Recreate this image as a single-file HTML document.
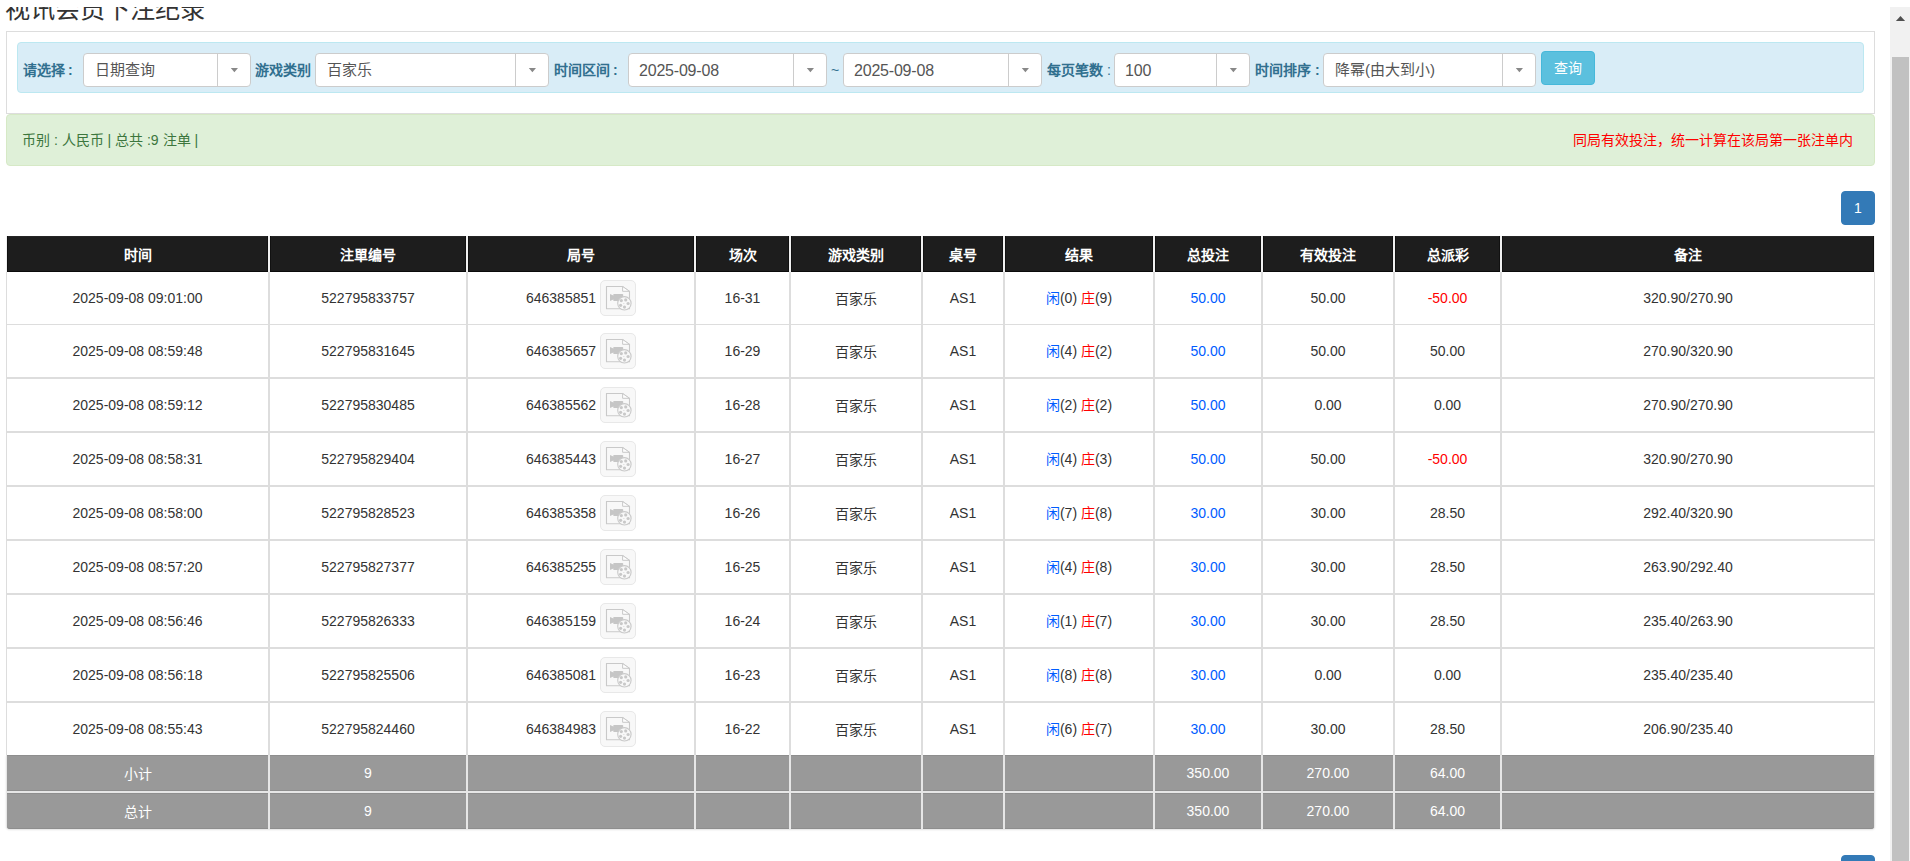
<!DOCTYPE html>
<html lang="zh-CN"><head><meta charset="utf-8"><style>
*{box-sizing:border-box;margin:0;padding:0}
html,body{width:1910px;height:861px;overflow:hidden;background:#fff}
body{font-family:"Liberation Sans",sans-serif;font-size:14px;color:#333;position:relative}
.abs{position:absolute}
.title{position:absolute;left:5px;top:-6px;font-weight:300;font-size:25.2px;line-height:30px;color:#333;white-space:nowrap}
.panel{position:absolute;left:6px;top:31px;width:1869px;height:83px;border:1px solid #ddd;background:#fff}
.ainfo{position:absolute;left:17px;top:42px;width:1847px;height:51px;background:#d9edf7;border:1px solid #bce8f1;border-radius:4px}
.lbl{position:absolute;top:60px;line-height:20px;font-size:14px;font-weight:bold;color:#31708f;white-space:nowrap}
.lbl .n{font-weight:normal}
.sel{position:absolute;background:#fff;border:1px solid #ccc;border-radius:4px}
.st{position:absolute;left:11px;top:0;line-height:32px;font-size:15px;color:#555;white-space:nowrap}
.dg{font-size:16px;letter-spacing:-0.2px;position:relative;left:-1px;top:1px}
.sd{position:absolute;top:0;bottom:0;width:1px;background:#ccc}
.sa{position:absolute;top:0;bottom:0}
.caret{position:absolute;left:50%;top:50%;margin-left:-3.2px;margin-top:-2px;width:0;height:0;border-left:3.7px solid transparent;border-right:3.7px solid transparent;border-top:4px solid #888}
.btn{position:absolute;left:1541px;top:51px;width:54px;height:34px;background:#5bc0de;border:1px solid #46b8da;border-radius:4px;color:#fff;font-size:14px;line-height:32px;text-align:center}
.asuc{position:absolute;left:6px;top:114px;width:1869px;height:52px;background:#dff0d8;border:1px solid #d6e9c6;border-radius:4px}
.gt{position:absolute;left:22px;top:130px;line-height:20px;font-size:14px;color:#3c763d;white-space:nowrap}
.rt{position:absolute;right:57px;top:130px;line-height:20px;font-size:14px;color:#f00;white-space:nowrap}
.pg{position:absolute;left:1841px;width:34px;height:34px;background:#337ab7;border:1px solid #337ab7;border-radius:4px;color:#fff;font-size:14px;line-height:32px;text-align:center}
.c{position:absolute;display:flex;align-items:center;justify-content:center;white-space:nowrap}
.th{padding-bottom:1px;background:#1d1d1d;color:#fff;font-weight:bold;font-size:14px;box-shadow:inset 0 -1px 0 #0b0b0b, inset 1px 0 0 #111, inset -1px 0 0 #111, inset 0 1px 0 #262626}
.td{background:#fff;color:#333;font-size:14px}
.ft{background:#999;color:#fff;font-size:14px;box-shadow:inset 0 -1px 0 #8e8e8e, inset 0 1px 0 #8e8e8e}
.bl{color:#005cff}.rd{color:#f00}.cj{position:relative;top:1px}
.ib{display:inline-block;width:36px;height:36px;margin-left:4px;border:1px solid #e8e8e8;border-radius:5px;background:#f8f8f8;position:relative;vertical-align:middle}
.ib svg{position:absolute;left:-1px;top:-1px}
.sb{position:absolute;left:1890px;top:7px;width:20px;height:854px;background:#f1f1f1}
.sbt{position:absolute;left:1892px;top:57px;width:17px;height:804px;background:#c1c1c1}
.sbu{position:absolute;left:1896px;top:16px;width:0;height:0;border-left:4.5px solid transparent;border-right:4.5px solid transparent;border-bottom:5px solid #505050}
</style></head><body>
<div class="title">视讯会员下注纪录</div><div class="abs" style="left:0;top:0;width:1910px;height:7px;background:#fff"></div>
<div class="panel"></div>
<div class="ainfo"></div>
<div class="lbl" style="left:23px">请选择<span style="margin-left:3px">:</span></div>
<div class="sel" style="left:83px;top:53px;width:168px;height:34px"><span class="st">日期查询</span><div class="sd" style="left:133px"></div><div class="sa" style="left:134px;width:32px"><svg width="32" height="32" style="position:absolute;left:0;top:0"><polygon points="12.80,14.1 20.00,14.1 16.40,18.2" fill="#888"/></svg></div></div>
<div class="lbl" style="left:255px">游戏类别</div>
<div class="sel" style="left:315px;top:53px;width:234px;height:34px"><span class="st">百家乐</span><div class="sd" style="left:199px"></div><div class="sa" style="left:200px;width:32px"><svg width="32" height="32" style="position:absolute;left:0;top:0"><polygon points="12.80,14.1 20.00,14.1 16.40,18.2" fill="#888"/></svg></div></div>
<div class="lbl" style="left:554px">时间区间<span style="margin-left:3px">:</span></div>
<div class="sel" style="left:628px;top:53px;width:199px;height:34px"><span class="st"><span class="dg">2025-09-08</span></span><div class="sd" style="left:164px"></div><div class="sa" style="left:165px;width:32px"><svg width="32" height="32" style="position:absolute;left:0;top:0"><polygon points="12.80,14.1 20.00,14.1 16.40,18.2" fill="#888"/></svg></div></div>
<div class="lbl n" style="left:831px;font-weight:normal">~</div>
<div class="sel" style="left:843px;top:53px;width:199px;height:34px"><span class="st"><span class="dg">2025-09-08</span></span><div class="sd" style="left:164px"></div><div class="sa" style="left:165px;width:32px"><svg width="32" height="32" style="position:absolute;left:0;top:0"><polygon points="12.80,14.1 20.00,14.1 16.40,18.2" fill="#888"/></svg></div></div>
<div class="lbl" style="left:1047px">每页笔数 <span class="n">:</span></div>
<div class="sel" style="left:1114px;top:53px;width:136px;height:34px"><span class="st"><span class="dg">100</span></span><div class="sd" style="left:101px"></div><div class="sa" style="left:102px;width:32px"><svg width="32" height="32" style="position:absolute;left:0;top:0"><polygon points="12.80,14.1 20.00,14.1 16.40,18.2" fill="#888"/></svg></div></div>
<div class="lbl" style="left:1255px">时间排序 :</div>
<div class="sel" style="left:1323px;top:53px;width:213px;height:34px"><span class="st">降幂(由大到小)</span><div class="sd" style="left:178px"></div><div class="sa" style="left:179px;width:32px"><svg width="32" height="32" style="position:absolute;left:0;top:0"><polygon points="12.80,14.1 20.00,14.1 16.40,18.2" fill="#888"/></svg></div></div>
<div class="btn">查询</div>
<div class="asuc"></div>
<div class="gt">币别 : 人民币 | 总共 :9 注单 |</div>
<div class="rt">同局有效投注，统一计算在该局第一张注单内</div>
<div class="pg" style="top:191px">1</div>
<div class="abs" style="left:6px;top:272px;width:1869px;height:483px;background:#ddd"></div>
<div class="abs" style="left:6px;top:236px;width:1869px;height:36px;background:#f0f0f0"></div>
<div class="abs" style="left:6px;top:755px;width:1869px;height:74px;background:#e6e6e6;border-radius:0 0 4px 4px;box-shadow:0 1px 2px rgba(0,0,0,.12)"></div>
<div class="c th" style="left:7px;top:236px;width:261px;height:36px"><span>时间</span></div>
<div class="c th" style="left:270px;top:236px;width:196px;height:36px"><span>注單编号</span></div>
<div class="c th" style="left:468px;top:236px;width:226px;height:36px"><span>局号</span></div>
<div class="c th" style="left:696px;top:236px;width:93px;height:36px"><span>场次</span></div>
<div class="c th" style="left:791px;top:236px;width:130px;height:36px"><span>游戏类别</span></div>
<div class="c th" style="left:923px;top:236px;width:80px;height:36px"><span>桌号</span></div>
<div class="c th" style="left:1005px;top:236px;width:148px;height:36px"><span>结果</span></div>
<div class="c th" style="left:1155px;top:236px;width:106px;height:36px"><span>总投注</span></div>
<div class="c th" style="left:1263px;top:236px;width:130px;height:36px"><span>有效投注</span></div>
<div class="c th" style="left:1395px;top:236px;width:105px;height:36px"><span>总派彩</span></div>
<div class="c th" style="left:1502px;top:236px;width:372px;height:36px"><span>备注</span></div>
<div class="c td" style="left:7px;top:272px;width:261px;height:52px"><span>2025-09-08 09:01:00</span></div>
<div class="c td" style="left:270px;top:272px;width:196px;height:52px"><span>522795833757</span></div>
<div class="c td" style="left:468px;top:272px;width:226px;height:52px"><span><span style="position:relative;top:1px">646385851</span><span class="ib"><svg width="36" height="36" viewBox="0 0 36 36"><path d="M6.5 6.5 H22.6 L29.5 11.5 V28.8 H6.5 Z" fill="#f8f8f8" stroke="#c9c9c9" stroke-width="1.1"/><path d="M22.6 6.5 V11.3 H29.5 Z" fill="#fdfdfd" stroke="#c9c9c9" stroke-width="1"/><path d="M10 14 L13.4 15.6 V14 H22.4 Q23.2 14 23.2 14.8 V21.1 H13.4 V19.6 L10 21 Z" fill="#c6c6c6"/><circle cx="24.4" cy="23.3" r="6.7" fill="#f8f8f8" stroke="#c9c9c9" stroke-width="1.1"/><circle cx="21.3" cy="20.6" r="1.6" fill="#c8c8c8"/><circle cx="25.7" cy="19.9" r="1.6" fill="#c8c8c8"/><circle cx="28.1" cy="23.5" r="1.6" fill="#c8c8c8"/><circle cx="24.5" cy="27.1" r="1.6" fill="#c8c8c8"/><circle cx="20.6" cy="25.3" r="1.6" fill="#c8c8c8"/><rect x="23.2" y="23.1" width="1.2" height="0.6" fill="#ccc"/></svg></span></span></div>
<div class="c td" style="left:696px;top:272px;width:93px;height:52px"><span>16-31</span></div>
<div class="c td" style="left:791px;top:272px;width:130px;height:52px"><span>百家乐</span></div>
<div class="c td" style="left:923px;top:272px;width:80px;height:52px"><span>AS1</span></div>
<div class="c td" style="left:1005px;top:272px;width:148px;height:52px"><span><span style="position:relative;top:-1px"><span class="bl">闲</span>(0) <span class="rd">庄</span>(9)</span></span></div>
<div class="c td" style="left:1155px;top:272px;width:106px;height:52px"><span><span class="bl">50.00</span></span></div>
<div class="c td" style="left:1263px;top:272px;width:130px;height:52px"><span>50.00</span></div>
<div class="c td" style="left:1395px;top:272px;width:105px;height:52px"><span><span class="rd">-50.00</span></span></div>
<div class="c td" style="left:1502px;top:272px;width:372px;height:52px"><span>320.90/270.90</span></div>
<div class="c td" style="left:7px;top:325px;width:261px;height:52px"><span>2025-09-08 08:59:48</span></div>
<div class="c td" style="left:270px;top:325px;width:196px;height:52px"><span>522795831645</span></div>
<div class="c td" style="left:468px;top:325px;width:226px;height:52px"><span><span style="position:relative;top:1px">646385657</span><span class="ib"><svg width="36" height="36" viewBox="0 0 36 36"><path d="M6.5 6.5 H22.6 L29.5 11.5 V28.8 H6.5 Z" fill="#f8f8f8" stroke="#c9c9c9" stroke-width="1.1"/><path d="M22.6 6.5 V11.3 H29.5 Z" fill="#fdfdfd" stroke="#c9c9c9" stroke-width="1"/><path d="M10 14 L13.4 15.6 V14 H22.4 Q23.2 14 23.2 14.8 V21.1 H13.4 V19.6 L10 21 Z" fill="#c6c6c6"/><circle cx="24.4" cy="23.3" r="6.7" fill="#f8f8f8" stroke="#c9c9c9" stroke-width="1.1"/><circle cx="21.3" cy="20.6" r="1.6" fill="#c8c8c8"/><circle cx="25.7" cy="19.9" r="1.6" fill="#c8c8c8"/><circle cx="28.1" cy="23.5" r="1.6" fill="#c8c8c8"/><circle cx="24.5" cy="27.1" r="1.6" fill="#c8c8c8"/><circle cx="20.6" cy="25.3" r="1.6" fill="#c8c8c8"/><rect x="23.2" y="23.1" width="1.2" height="0.6" fill="#ccc"/></svg></span></span></div>
<div class="c td" style="left:696px;top:325px;width:93px;height:52px"><span>16-29</span></div>
<div class="c td" style="left:791px;top:325px;width:130px;height:52px"><span>百家乐</span></div>
<div class="c td" style="left:923px;top:325px;width:80px;height:52px"><span>AS1</span></div>
<div class="c td" style="left:1005px;top:325px;width:148px;height:52px"><span><span style="position:relative;top:-1px"><span class="bl">闲</span>(4) <span class="rd">庄</span>(2)</span></span></div>
<div class="c td" style="left:1155px;top:325px;width:106px;height:52px"><span><span class="bl">50.00</span></span></div>
<div class="c td" style="left:1263px;top:325px;width:130px;height:52px"><span>50.00</span></div>
<div class="c td" style="left:1395px;top:325px;width:105px;height:52px"><span><span class="">50.00</span></span></div>
<div class="c td" style="left:1502px;top:325px;width:372px;height:52px"><span>270.90/320.90</span></div>
<div class="c td" style="left:7px;top:379px;width:261px;height:52px"><span>2025-09-08 08:59:12</span></div>
<div class="c td" style="left:270px;top:379px;width:196px;height:52px"><span>522795830485</span></div>
<div class="c td" style="left:468px;top:379px;width:226px;height:52px"><span><span style="position:relative;top:1px">646385562</span><span class="ib"><svg width="36" height="36" viewBox="0 0 36 36"><path d="M6.5 6.5 H22.6 L29.5 11.5 V28.8 H6.5 Z" fill="#f8f8f8" stroke="#c9c9c9" stroke-width="1.1"/><path d="M22.6 6.5 V11.3 H29.5 Z" fill="#fdfdfd" stroke="#c9c9c9" stroke-width="1"/><path d="M10 14 L13.4 15.6 V14 H22.4 Q23.2 14 23.2 14.8 V21.1 H13.4 V19.6 L10 21 Z" fill="#c6c6c6"/><circle cx="24.4" cy="23.3" r="6.7" fill="#f8f8f8" stroke="#c9c9c9" stroke-width="1.1"/><circle cx="21.3" cy="20.6" r="1.6" fill="#c8c8c8"/><circle cx="25.7" cy="19.9" r="1.6" fill="#c8c8c8"/><circle cx="28.1" cy="23.5" r="1.6" fill="#c8c8c8"/><circle cx="24.5" cy="27.1" r="1.6" fill="#c8c8c8"/><circle cx="20.6" cy="25.3" r="1.6" fill="#c8c8c8"/><rect x="23.2" y="23.1" width="1.2" height="0.6" fill="#ccc"/></svg></span></span></div>
<div class="c td" style="left:696px;top:379px;width:93px;height:52px"><span>16-28</span></div>
<div class="c td" style="left:791px;top:379px;width:130px;height:52px"><span>百家乐</span></div>
<div class="c td" style="left:923px;top:379px;width:80px;height:52px"><span>AS1</span></div>
<div class="c td" style="left:1005px;top:379px;width:148px;height:52px"><span><span style="position:relative;top:-1px"><span class="bl">闲</span>(2) <span class="rd">庄</span>(2)</span></span></div>
<div class="c td" style="left:1155px;top:379px;width:106px;height:52px"><span><span class="bl">50.00</span></span></div>
<div class="c td" style="left:1263px;top:379px;width:130px;height:52px"><span>0.00</span></div>
<div class="c td" style="left:1395px;top:379px;width:105px;height:52px"><span><span class="">0.00</span></span></div>
<div class="c td" style="left:1502px;top:379px;width:372px;height:52px"><span>270.90/270.90</span></div>
<div class="c td" style="left:7px;top:433px;width:261px;height:52px"><span>2025-09-08 08:58:31</span></div>
<div class="c td" style="left:270px;top:433px;width:196px;height:52px"><span>522795829404</span></div>
<div class="c td" style="left:468px;top:433px;width:226px;height:52px"><span><span style="position:relative;top:1px">646385443</span><span class="ib"><svg width="36" height="36" viewBox="0 0 36 36"><path d="M6.5 6.5 H22.6 L29.5 11.5 V28.8 H6.5 Z" fill="#f8f8f8" stroke="#c9c9c9" stroke-width="1.1"/><path d="M22.6 6.5 V11.3 H29.5 Z" fill="#fdfdfd" stroke="#c9c9c9" stroke-width="1"/><path d="M10 14 L13.4 15.6 V14 H22.4 Q23.2 14 23.2 14.8 V21.1 H13.4 V19.6 L10 21 Z" fill="#c6c6c6"/><circle cx="24.4" cy="23.3" r="6.7" fill="#f8f8f8" stroke="#c9c9c9" stroke-width="1.1"/><circle cx="21.3" cy="20.6" r="1.6" fill="#c8c8c8"/><circle cx="25.7" cy="19.9" r="1.6" fill="#c8c8c8"/><circle cx="28.1" cy="23.5" r="1.6" fill="#c8c8c8"/><circle cx="24.5" cy="27.1" r="1.6" fill="#c8c8c8"/><circle cx="20.6" cy="25.3" r="1.6" fill="#c8c8c8"/><rect x="23.2" y="23.1" width="1.2" height="0.6" fill="#ccc"/></svg></span></span></div>
<div class="c td" style="left:696px;top:433px;width:93px;height:52px"><span>16-27</span></div>
<div class="c td" style="left:791px;top:433px;width:130px;height:52px"><span>百家乐</span></div>
<div class="c td" style="left:923px;top:433px;width:80px;height:52px"><span>AS1</span></div>
<div class="c td" style="left:1005px;top:433px;width:148px;height:52px"><span><span style="position:relative;top:-1px"><span class="bl">闲</span>(4) <span class="rd">庄</span>(3)</span></span></div>
<div class="c td" style="left:1155px;top:433px;width:106px;height:52px"><span><span class="bl">50.00</span></span></div>
<div class="c td" style="left:1263px;top:433px;width:130px;height:52px"><span>50.00</span></div>
<div class="c td" style="left:1395px;top:433px;width:105px;height:52px"><span><span class="rd">-50.00</span></span></div>
<div class="c td" style="left:1502px;top:433px;width:372px;height:52px"><span>320.90/270.90</span></div>
<div class="c td" style="left:7px;top:487px;width:261px;height:52px"><span>2025-09-08 08:58:00</span></div>
<div class="c td" style="left:270px;top:487px;width:196px;height:52px"><span>522795828523</span></div>
<div class="c td" style="left:468px;top:487px;width:226px;height:52px"><span><span style="position:relative;top:1px">646385358</span><span class="ib"><svg width="36" height="36" viewBox="0 0 36 36"><path d="M6.5 6.5 H22.6 L29.5 11.5 V28.8 H6.5 Z" fill="#f8f8f8" stroke="#c9c9c9" stroke-width="1.1"/><path d="M22.6 6.5 V11.3 H29.5 Z" fill="#fdfdfd" stroke="#c9c9c9" stroke-width="1"/><path d="M10 14 L13.4 15.6 V14 H22.4 Q23.2 14 23.2 14.8 V21.1 H13.4 V19.6 L10 21 Z" fill="#c6c6c6"/><circle cx="24.4" cy="23.3" r="6.7" fill="#f8f8f8" stroke="#c9c9c9" stroke-width="1.1"/><circle cx="21.3" cy="20.6" r="1.6" fill="#c8c8c8"/><circle cx="25.7" cy="19.9" r="1.6" fill="#c8c8c8"/><circle cx="28.1" cy="23.5" r="1.6" fill="#c8c8c8"/><circle cx="24.5" cy="27.1" r="1.6" fill="#c8c8c8"/><circle cx="20.6" cy="25.3" r="1.6" fill="#c8c8c8"/><rect x="23.2" y="23.1" width="1.2" height="0.6" fill="#ccc"/></svg></span></span></div>
<div class="c td" style="left:696px;top:487px;width:93px;height:52px"><span>16-26</span></div>
<div class="c td" style="left:791px;top:487px;width:130px;height:52px"><span>百家乐</span></div>
<div class="c td" style="left:923px;top:487px;width:80px;height:52px"><span>AS1</span></div>
<div class="c td" style="left:1005px;top:487px;width:148px;height:52px"><span><span style="position:relative;top:-1px"><span class="bl">闲</span>(7) <span class="rd">庄</span>(8)</span></span></div>
<div class="c td" style="left:1155px;top:487px;width:106px;height:52px"><span><span class="bl">30.00</span></span></div>
<div class="c td" style="left:1263px;top:487px;width:130px;height:52px"><span>30.00</span></div>
<div class="c td" style="left:1395px;top:487px;width:105px;height:52px"><span><span class="">28.50</span></span></div>
<div class="c td" style="left:1502px;top:487px;width:372px;height:52px"><span>292.40/320.90</span></div>
<div class="c td" style="left:7px;top:541px;width:261px;height:52px"><span>2025-09-08 08:57:20</span></div>
<div class="c td" style="left:270px;top:541px;width:196px;height:52px"><span>522795827377</span></div>
<div class="c td" style="left:468px;top:541px;width:226px;height:52px"><span><span style="position:relative;top:1px">646385255</span><span class="ib"><svg width="36" height="36" viewBox="0 0 36 36"><path d="M6.5 6.5 H22.6 L29.5 11.5 V28.8 H6.5 Z" fill="#f8f8f8" stroke="#c9c9c9" stroke-width="1.1"/><path d="M22.6 6.5 V11.3 H29.5 Z" fill="#fdfdfd" stroke="#c9c9c9" stroke-width="1"/><path d="M10 14 L13.4 15.6 V14 H22.4 Q23.2 14 23.2 14.8 V21.1 H13.4 V19.6 L10 21 Z" fill="#c6c6c6"/><circle cx="24.4" cy="23.3" r="6.7" fill="#f8f8f8" stroke="#c9c9c9" stroke-width="1.1"/><circle cx="21.3" cy="20.6" r="1.6" fill="#c8c8c8"/><circle cx="25.7" cy="19.9" r="1.6" fill="#c8c8c8"/><circle cx="28.1" cy="23.5" r="1.6" fill="#c8c8c8"/><circle cx="24.5" cy="27.1" r="1.6" fill="#c8c8c8"/><circle cx="20.6" cy="25.3" r="1.6" fill="#c8c8c8"/><rect x="23.2" y="23.1" width="1.2" height="0.6" fill="#ccc"/></svg></span></span></div>
<div class="c td" style="left:696px;top:541px;width:93px;height:52px"><span>16-25</span></div>
<div class="c td" style="left:791px;top:541px;width:130px;height:52px"><span>百家乐</span></div>
<div class="c td" style="left:923px;top:541px;width:80px;height:52px"><span>AS1</span></div>
<div class="c td" style="left:1005px;top:541px;width:148px;height:52px"><span><span style="position:relative;top:-1px"><span class="bl">闲</span>(4) <span class="rd">庄</span>(8)</span></span></div>
<div class="c td" style="left:1155px;top:541px;width:106px;height:52px"><span><span class="bl">30.00</span></span></div>
<div class="c td" style="left:1263px;top:541px;width:130px;height:52px"><span>30.00</span></div>
<div class="c td" style="left:1395px;top:541px;width:105px;height:52px"><span><span class="">28.50</span></span></div>
<div class="c td" style="left:1502px;top:541px;width:372px;height:52px"><span>263.90/292.40</span></div>
<div class="c td" style="left:7px;top:595px;width:261px;height:52px"><span>2025-09-08 08:56:46</span></div>
<div class="c td" style="left:270px;top:595px;width:196px;height:52px"><span>522795826333</span></div>
<div class="c td" style="left:468px;top:595px;width:226px;height:52px"><span><span style="position:relative;top:1px">646385159</span><span class="ib"><svg width="36" height="36" viewBox="0 0 36 36"><path d="M6.5 6.5 H22.6 L29.5 11.5 V28.8 H6.5 Z" fill="#f8f8f8" stroke="#c9c9c9" stroke-width="1.1"/><path d="M22.6 6.5 V11.3 H29.5 Z" fill="#fdfdfd" stroke="#c9c9c9" stroke-width="1"/><path d="M10 14 L13.4 15.6 V14 H22.4 Q23.2 14 23.2 14.8 V21.1 H13.4 V19.6 L10 21 Z" fill="#c6c6c6"/><circle cx="24.4" cy="23.3" r="6.7" fill="#f8f8f8" stroke="#c9c9c9" stroke-width="1.1"/><circle cx="21.3" cy="20.6" r="1.6" fill="#c8c8c8"/><circle cx="25.7" cy="19.9" r="1.6" fill="#c8c8c8"/><circle cx="28.1" cy="23.5" r="1.6" fill="#c8c8c8"/><circle cx="24.5" cy="27.1" r="1.6" fill="#c8c8c8"/><circle cx="20.6" cy="25.3" r="1.6" fill="#c8c8c8"/><rect x="23.2" y="23.1" width="1.2" height="0.6" fill="#ccc"/></svg></span></span></div>
<div class="c td" style="left:696px;top:595px;width:93px;height:52px"><span>16-24</span></div>
<div class="c td" style="left:791px;top:595px;width:130px;height:52px"><span>百家乐</span></div>
<div class="c td" style="left:923px;top:595px;width:80px;height:52px"><span>AS1</span></div>
<div class="c td" style="left:1005px;top:595px;width:148px;height:52px"><span><span style="position:relative;top:-1px"><span class="bl">闲</span>(1) <span class="rd">庄</span>(7)</span></span></div>
<div class="c td" style="left:1155px;top:595px;width:106px;height:52px"><span><span class="bl">30.00</span></span></div>
<div class="c td" style="left:1263px;top:595px;width:130px;height:52px"><span>30.00</span></div>
<div class="c td" style="left:1395px;top:595px;width:105px;height:52px"><span><span class="">28.50</span></span></div>
<div class="c td" style="left:1502px;top:595px;width:372px;height:52px"><span>235.40/263.90</span></div>
<div class="c td" style="left:7px;top:649px;width:261px;height:52px"><span>2025-09-08 08:56:18</span></div>
<div class="c td" style="left:270px;top:649px;width:196px;height:52px"><span>522795825506</span></div>
<div class="c td" style="left:468px;top:649px;width:226px;height:52px"><span><span style="position:relative;top:1px">646385081</span><span class="ib"><svg width="36" height="36" viewBox="0 0 36 36"><path d="M6.5 6.5 H22.6 L29.5 11.5 V28.8 H6.5 Z" fill="#f8f8f8" stroke="#c9c9c9" stroke-width="1.1"/><path d="M22.6 6.5 V11.3 H29.5 Z" fill="#fdfdfd" stroke="#c9c9c9" stroke-width="1"/><path d="M10 14 L13.4 15.6 V14 H22.4 Q23.2 14 23.2 14.8 V21.1 H13.4 V19.6 L10 21 Z" fill="#c6c6c6"/><circle cx="24.4" cy="23.3" r="6.7" fill="#f8f8f8" stroke="#c9c9c9" stroke-width="1.1"/><circle cx="21.3" cy="20.6" r="1.6" fill="#c8c8c8"/><circle cx="25.7" cy="19.9" r="1.6" fill="#c8c8c8"/><circle cx="28.1" cy="23.5" r="1.6" fill="#c8c8c8"/><circle cx="24.5" cy="27.1" r="1.6" fill="#c8c8c8"/><circle cx="20.6" cy="25.3" r="1.6" fill="#c8c8c8"/><rect x="23.2" y="23.1" width="1.2" height="0.6" fill="#ccc"/></svg></span></span></div>
<div class="c td" style="left:696px;top:649px;width:93px;height:52px"><span>16-23</span></div>
<div class="c td" style="left:791px;top:649px;width:130px;height:52px"><span>百家乐</span></div>
<div class="c td" style="left:923px;top:649px;width:80px;height:52px"><span>AS1</span></div>
<div class="c td" style="left:1005px;top:649px;width:148px;height:52px"><span><span style="position:relative;top:-1px"><span class="bl">闲</span>(8) <span class="rd">庄</span>(8)</span></span></div>
<div class="c td" style="left:1155px;top:649px;width:106px;height:52px"><span><span class="bl">30.00</span></span></div>
<div class="c td" style="left:1263px;top:649px;width:130px;height:52px"><span>0.00</span></div>
<div class="c td" style="left:1395px;top:649px;width:105px;height:52px"><span><span class="">0.00</span></span></div>
<div class="c td" style="left:1502px;top:649px;width:372px;height:52px"><span>235.40/235.40</span></div>
<div class="c td" style="left:7px;top:703px;width:261px;height:52px"><span>2025-09-08 08:55:43</span></div>
<div class="c td" style="left:270px;top:703px;width:196px;height:52px"><span>522795824460</span></div>
<div class="c td" style="left:468px;top:703px;width:226px;height:52px"><span><span style="position:relative;top:1px">646384983</span><span class="ib"><svg width="36" height="36" viewBox="0 0 36 36"><path d="M6.5 6.5 H22.6 L29.5 11.5 V28.8 H6.5 Z" fill="#f8f8f8" stroke="#c9c9c9" stroke-width="1.1"/><path d="M22.6 6.5 V11.3 H29.5 Z" fill="#fdfdfd" stroke="#c9c9c9" stroke-width="1"/><path d="M10 14 L13.4 15.6 V14 H22.4 Q23.2 14 23.2 14.8 V21.1 H13.4 V19.6 L10 21 Z" fill="#c6c6c6"/><circle cx="24.4" cy="23.3" r="6.7" fill="#f8f8f8" stroke="#c9c9c9" stroke-width="1.1"/><circle cx="21.3" cy="20.6" r="1.6" fill="#c8c8c8"/><circle cx="25.7" cy="19.9" r="1.6" fill="#c8c8c8"/><circle cx="28.1" cy="23.5" r="1.6" fill="#c8c8c8"/><circle cx="24.5" cy="27.1" r="1.6" fill="#c8c8c8"/><circle cx="20.6" cy="25.3" r="1.6" fill="#c8c8c8"/><rect x="23.2" y="23.1" width="1.2" height="0.6" fill="#ccc"/></svg></span></span></div>
<div class="c td" style="left:696px;top:703px;width:93px;height:52px"><span>16-22</span></div>
<div class="c td" style="left:791px;top:703px;width:130px;height:52px"><span>百家乐</span></div>
<div class="c td" style="left:923px;top:703px;width:80px;height:52px"><span>AS1</span></div>
<div class="c td" style="left:1005px;top:703px;width:148px;height:52px"><span><span style="position:relative;top:-1px"><span class="bl">闲</span>(6) <span class="rd">庄</span>(7)</span></span></div>
<div class="c td" style="left:1155px;top:703px;width:106px;height:52px"><span><span class="bl">30.00</span></span></div>
<div class="c td" style="left:1263px;top:703px;width:130px;height:52px"><span>30.00</span></div>
<div class="c td" style="left:1395px;top:703px;width:105px;height:52px"><span><span class="">28.50</span></span></div>
<div class="c td" style="left:1502px;top:703px;width:372px;height:52px"><span>206.90/235.40</span></div>
<div class="c ft" style="left:7px;top:755px;width:261px;height:36px"><span>小计</span></div>
<div class="c ft" style="left:270px;top:755px;width:196px;height:36px"><span>9</span></div>
<div class="c ft" style="left:468px;top:755px;width:226px;height:36px"><span></span></div>
<div class="c ft" style="left:696px;top:755px;width:93px;height:36px"><span></span></div>
<div class="c ft" style="left:791px;top:755px;width:130px;height:36px"><span></span></div>
<div class="c ft" style="left:923px;top:755px;width:80px;height:36px"><span></span></div>
<div class="c ft" style="left:1005px;top:755px;width:148px;height:36px"><span></span></div>
<div class="c ft" style="left:1155px;top:755px;width:106px;height:36px"><span>350.00</span></div>
<div class="c ft" style="left:1263px;top:755px;width:130px;height:36px"><span>270.00</span></div>
<div class="c ft" style="left:1395px;top:755px;width:105px;height:36px"><span>64.00</span></div>
<div class="c ft" style="left:1502px;top:755px;width:372px;height:36px"><span></span></div>
<div class="c ft" style="left:7px;top:793px;width:261px;height:36px;border-bottom-left-radius:3px"><span>总计</span></div>
<div class="c ft" style="left:270px;top:793px;width:196px;height:36px"><span>9</span></div>
<div class="c ft" style="left:468px;top:793px;width:226px;height:36px"><span></span></div>
<div class="c ft" style="left:696px;top:793px;width:93px;height:36px"><span></span></div>
<div class="c ft" style="left:791px;top:793px;width:130px;height:36px"><span></span></div>
<div class="c ft" style="left:923px;top:793px;width:80px;height:36px"><span></span></div>
<div class="c ft" style="left:1005px;top:793px;width:148px;height:36px"><span></span></div>
<div class="c ft" style="left:1155px;top:793px;width:106px;height:36px"><span>350.00</span></div>
<div class="c ft" style="left:1263px;top:793px;width:130px;height:36px"><span>270.00</span></div>
<div class="c ft" style="left:1395px;top:793px;width:105px;height:36px"><span>64.00</span></div>
<div class="c ft" style="left:1502px;top:793px;width:372px;height:36px;border-bottom-right-radius:3px"><span></span></div>
<div class="pg" style="top:855px"></div>
<div class="sb"></div><svg class="abs" style="left:1890px;top:7px" width="20" height="20"><polygon points="5.9,14 15.1,14 10.5,9" fill="#505050"/></svg><div class="sbt"></div>
</body></html>
